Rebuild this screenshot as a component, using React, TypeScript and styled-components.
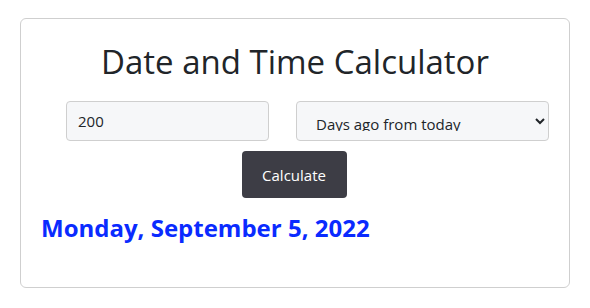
import React, { useState } from 'react'
import styled, { createGlobalStyle } from 'styled-components'

const GlobalStyle = createGlobalStyle`
  html, body {
    margin: 0;
    padding: 0;
    background: #fff;
  }
  body {
    font-family: 'Open Sans', 'Noto Sans', Arial, sans-serif;
    color: #212529;
  }
`

const App = () => {
  const [days, setDays] = useState('200')
  const [mode, setMode] = useState('ago')

  return (
    <>
      <GlobalStyle />
      <Page>
        <Card>
          <Title>Date and Time Calculator</Title>
          <FormRow>
            <NumberInput value={days} onChange={(e) => setDays(e.target.value)} />
            <ModeSelect value={mode} onChange={(e) => setMode(e.target.value)}>
              <option value="ago">Days ago from today</option>
              <option value="from">Days from today</option>
            </ModeSelect>
          </FormRow>
          <ButtonRow>
            <CalcButton type="button">Calculate</CalcButton>
          </ButtonRow>
          <Result>Monday, September 5, 2022</Result>
        </Card>
      </Page>
    </>
  )
}

const Page = styled.div`
  padding: 18px 20px;
`

const Card = styled.div`
  box-sizing: border-box;
  width: 550px;
  height: 270px;
  border: 1px solid #cfcfcf;
  border-radius: 6px;
  padding: 20px 20px 0 20px;
`

const Title = styled.h1`
  margin: 0;
  text-align: center;
  font-weight: 400;
  font-size: 33px;
  line-height: 46px;
  color: #212529;
`

const FormRow = styled.div`
  display: flex;
  align-items: center;
  margin-top: 16px;
  padding-left: 25px;
  gap: 27px;
`

const NumberInput = styled.input`
  box-sizing: border-box;
  width: 203px;
  height: 40px;
  padding: 6px 11px;
  font-family: inherit;
  font-size: 15px;
  color: #212529;
  background: #f6f7f9;
  border: 1px solid #cfcfcf;
  border-radius: 4px;
  outline: none;
`

const ModeSelect = styled.select`
  box-sizing: border-box;
  width: 253px;
  height: 40px;
  padding: 11px 30px 9px 15px;
  font-family: inherit;
  font-size: 15px;
  color: #212529;
  background: #f6f7f9;
  border: 1px solid #cfcfcf;
  border-radius: 4px;
  outline: none;
`

const ButtonRow = styled.div`
  display: flex;
  justify-content: center;
  margin-top: 10px;
  padding-right: 2px;
`

const CalcButton = styled.button`
  box-sizing: border-box;
  width: 105px;
  height: 47px;
  border: none;
  border-radius: 4px;
  background: #3d3d45;
  color: #fff;
  font-family: inherit;
  font-size: 15px;
  cursor: pointer;
`

const Result = styled.h2`
  margin: 13px 0 0 0;
  font-size: 24px;
  line-height: 34px;
  font-weight: 700;
  color: #0a2bff;
`

export default App
